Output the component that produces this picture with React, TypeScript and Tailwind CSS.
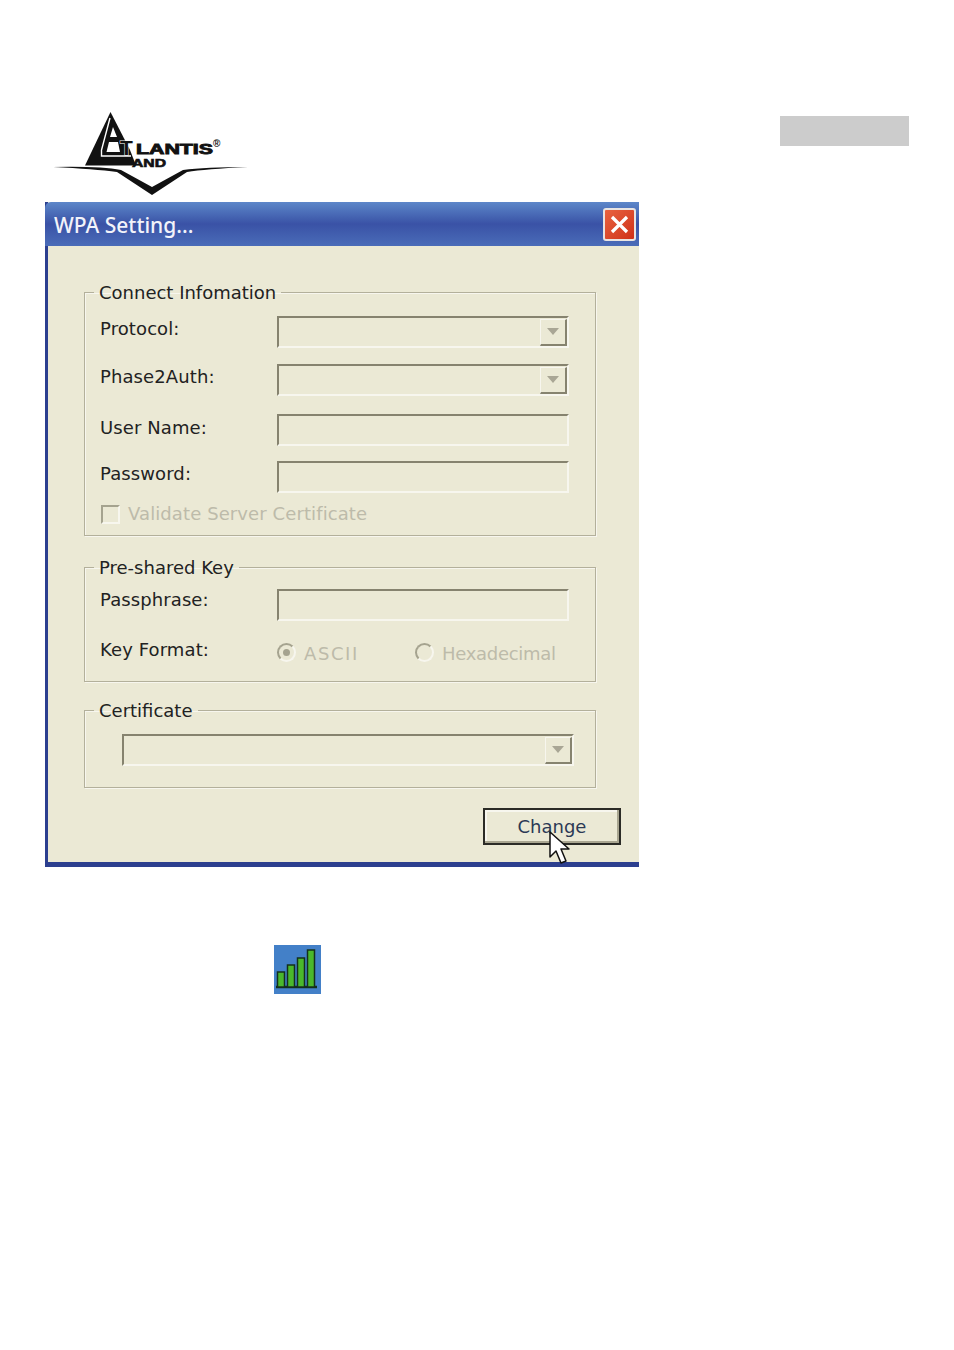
const FONT = "font-['DejaVu_Sans',sans-serif]";

function Logo() {
  return (
    <svg width="200" height="90" viewBox="50 108 200 90" className="block">
      {/* triangle mark */}
      <path d="M110.5 112 L130 150 L136 165.5 L85 165.5 Z" fill="#111" />
      <path d="M110 118 L101.5 150 L101.5 156 L131 156" fill="none" stroke="#fff" strokeWidth="1.4" />
      <path d="M113 127 L117 137 L110 137 Z" fill="#fff" />
      <path d="M109 142 L118 142 L120 152 L106.5 152 Z" fill="#fff" />
      {/* swoosh with the V */}
      <path d="M53 167 Q100 166 121 170 L152 187 L183 170 Q205 167 248 167 Q205 169 187 172 L152 195 L117 172 Q95 169 53 167 Z" fill="#111" />
      <text x="120" y="155" fontFamily="Liberation Sans" fontWeight="700" fontSize="21" stroke="#fff" strokeWidth="1" fill="#111" style={{ paintOrder: "stroke" }}>
        T
      </text>
      <text x="136" y="154" fontFamily="Liberation Sans" fontWeight="700" fontSize="15" textLength="77" lengthAdjust="spacingAndGlyphs" stroke="#111" strokeWidth="0.9" fill="#111">
        LANTIS
      </text>
      <text x="132" y="167" fontFamily="Liberation Sans" fontWeight="700" fontSize="11" textLength="34" lengthAdjust="spacingAndGlyphs" stroke="#111" strokeWidth="0.6" fill="#111">
        AND
      </text>
      <text x="213" y="147" fontFamily="Liberation Sans" fontWeight="700" fontSize="10" fill="#111">
        ®
      </text>
    </svg>
  );
}

function Group({ title, className, children }: { title: string; className: string; children: React.ReactNode }) {
  return (
    <fieldset className={`w-[512px] border border-[#b3b09b] shadow-[inset_1px_1px_0_#f7f6ee,1px_1px_0_#f7f6ee] pl-[15px] ${className}`}>
      <legend className="-ml-[6px] px-[5px] h-[22px] leading-[24px] text-[18px] text-[#222]">{title}</legend>
      {children}
    </fieldset>
  );
}

function Field({ combo }: { combo?: boolean }) {
  return (
    <div className="w-[292px] h-[32px] flex justify-end items-center border-t-2 border-l-2 border-[#86836f] border-b-2 border-b-[#f7f6ee] border-r-2 border-r-[#f7f6ee]">
      {combo && <ComboButton />}
    </div>
  );
}

function ComboButton() {
  return (
    <div className="w-[27px] h-[27px] flex items-center justify-center bg-[#ebe9d5] border-t border-l border-[#f7f6ee] border-r-2 border-b-2 border-r-[#86836f] border-b-[#86836f]">
      <svg width="12" height="7" viewBox="0 0 12 7">
        <path d="M0 0 H12 L6 7 Z" fill="#a9a695" />
      </svg>
    </div>
  );
}

function Row({ label, combo, className, labelClass }: { label: string; combo?: boolean; className: string; labelClass: string }) {
  return (
    <div className={`flex ${className}`}>
      <div className={`w-[177px] text-[18px] leading-[22px] tracking-[0.1px] text-[#222] ${labelClass}`}>{label}</div>
      <Field combo={combo} />
    </div>
  );
}

function Radio({ label, checked, className, textClass }: { label: string; checked?: boolean; className: string; textClass: string }) {
  return (
    <div className={`flex items-center ${className}`}>
      <div className="w-[19px] h-[19px] rounded-full flex items-center justify-center border-2 border-[#a5a38f] border-r-[#f7f6ee] border-b-[#f7f6ee]">
        {checked && <div className="w-[7px] h-[7px] rounded-full bg-[#a5a38f]" />}
      </div>
      <span className={`ml-[8px] mt-[3px] text-[18px] leading-[22px] text-[#bdbbaa] ${textClass}`}>{label}</span>
    </div>
  );
}

export default function App() {
  return (
    <div className={`w-[954px] h-[1350px] bg-white overflow-hidden ${FONT}`}>
      <div className="flex items-start justify-between pl-[50px] pr-[45px] pt-[108px] h-[202px]">
        <Logo />
        <div className="w-[129px] h-[30px] mt-2 bg-[#cccccc]" />
      </div>

      <div className="ml-[45px] w-[594px] h-[665px] flex flex-col border-l-[3px] border-r-0 border-b-[5px] border-[#2c3f8f] bg-[#ebe9d5]">
        <div className="-ml-[3px] h-[44px] shrink-0 flex items-center justify-between pl-[9px] pr-[3px] rounded-tl-md bg-gradient-to-b from-[#5d87c9] via-[#3a52a6] to-[#4a6cb8]">
          <span className="pt-[3px] font-['Noto_Sans',sans-serif] text-[21px] font-medium text-[#f2f3fa]">WPA Setting...</span>
          <div className="w-[33px] h-[33px] flex items-center justify-center rounded-[3px] border-2 border-[#e8e4e2] bg-gradient-to-br from-[#e8623f] to-[#cf2f17]">
            <svg width="21" height="21" viewBox="0 0 21 21">
              <path d="M3 3 L18 18 M18 3 L3 18" stroke="#fff" strokeWidth="3.2" />
            </svg>
          </div>
        </div>

        <div className="pl-[36px] flex-1">
          <Group title="Connect Infomation" className="mt-[35px] h-[255px]">
            <Row label="Protocol:" combo className="mt-[13px]" labelClass="mt-[2px]" />
            <Row label="Phase2Auth:" combo className="mt-[16px]" labelClass="mt-[2px]" />
            <Row label="User Name:" className="mt-[18px]" labelClass="mt-[3px]" />
            <Row label="Password:" className="mt-[15px]" labelClass="mt-[2px]" />
            <div className="flex items-center mt-[10px] ml-[1px]">
              <div className="w-[19px] h-[19px] border-2 border-[#a5a38f] border-r-[#f7f6ee] border-b-[#f7f6ee]" />
              <span className="ml-[8px] text-[18px] leading-[22px] tracking-[0.1px] text-[#bdbbaa]">Validate Server Certificate</span>
            </div>
          </Group>

          <Group title="Pre-shared Key" className="mt-[20px] h-[126px]">
            <Row label="Passphrase:" className="mt-[11px]" labelClass="mt-0" />
            <div className="flex mt-[17px]">
              <div className="w-[177px] mt-[1px] text-[18px] leading-[22px] tracking-[0.1px] text-[#222]">Key Format:</div>
              <Radio label="ASCII" checked className="w-[138px] mt-[2px]" textClass="tracking-[1.6px]" />
              <Radio label="Hexadecimal" className="mt-[2px]" textClass="tracking-[-0.3px]" />
            </div>
          </Group>

          <Group title="Certificate" className="mt-[17px] h-[89px]">
            <div className="ml-[22px] mt-[13px] w-[452px] h-[32px] flex justify-end items-center border-t-2 border-l-2 border-[#86836f] border-b-2 border-b-[#f7f6ee] border-r-2 border-r-[#f7f6ee]">
              <ComboButton />
            </div>
          </Group>

          <div className="relative mt-[20px] ml-[399px] w-[138px] h-[37px] flex items-center justify-center border-2 border-[#2b2b26] bg-[#ebe9d5] shadow-[inset_-2px_-2px_0_#a9a691,inset_2px_2px_0_#f7f6ee] text-[18px] text-[#2c3a55]">
            Change
            <svg width="22" height="34" viewBox="0 0 22 34" className="absolute left-[64px] top-[21px]">
              <path d="M1 1 V26 L7 20 L12 32 L17 30 L12 18 L20 18 Z" fill="#fff" stroke="#111" strokeWidth="1.5" strokeLinejoin="round" />
            </svg>
          </div>
        </div>
      </div>

      <div className="ml-[274px] mt-[78px] w-[47px] h-[49px] bg-[#4380c8]">
        <svg width="47" height="49" viewBox="0 0 47 49">
          <path d="M2 42 H43" stroke="#14301c" strokeWidth="2.5" />
          {[
            [3.5, 27],
            [13.5, 20],
            [23.5, 13],
            [33.5, 5],
          ].map(([x, y]) => (
            <rect key={x} x={x} y={y} width="7" height={42 - y} fill="#4ab82c" stroke="#14301c" strokeWidth="1.5" />
          ))}
        </svg>
      </div>
    </div>
  );
}
